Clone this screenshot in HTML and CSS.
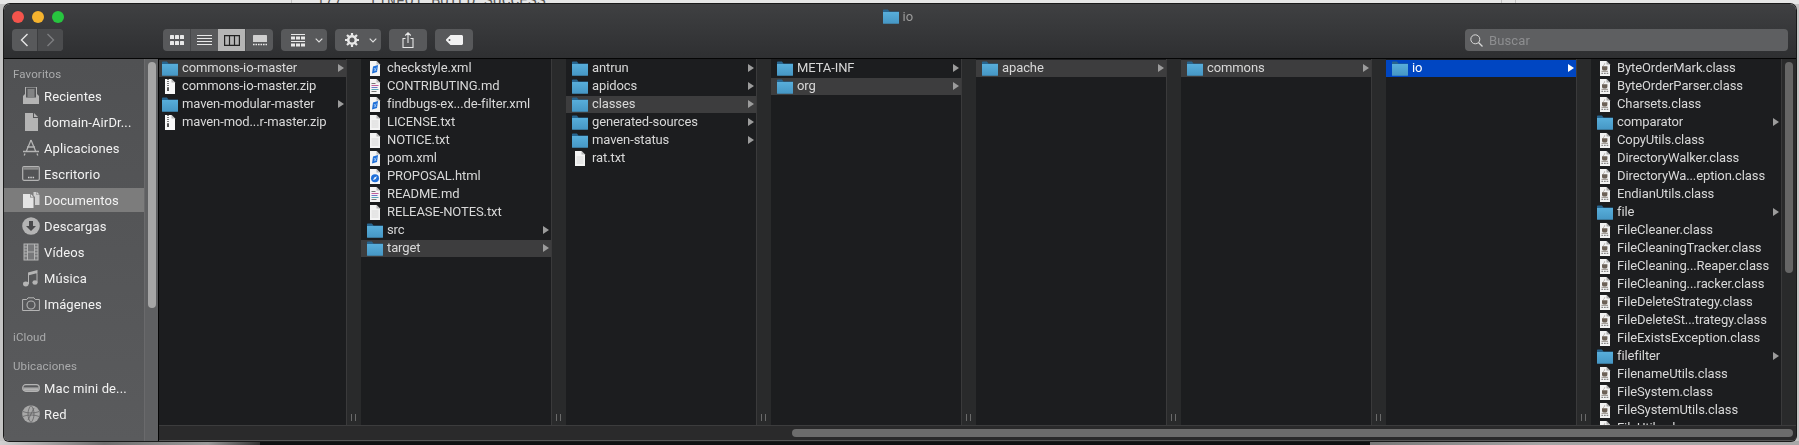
FILE: index.html
```html
<html>
  <head>
    <meta charset="utf-8">
    <title>io</title>
    <link rel="stylesheet" href="styles.css">
  </head>
  <body>
    <svg class="defs" width="0" height="0">
      <defs>
        <linearGradient id="folderFill" x1="0" y1="0" x2="0" y2="1">
          <stop offset="0" stop-color="#58aedb"/>
          <stop offset="1" stop-color="#4596c4"/>
        </linearGradient>
        <symbol id="folder" viewBox="0 0 16 15">
          <path d="M0 1.2C0 .8.3.5.7.5h4.2L6.5 2.4H16V5H0z" fill="#27658f"/>
          <path d="M0 3h16v11.2c0 .3-.3.6-.6.6H.6c-.3 0-.6-.3-.6-.6z" fill="url(#folderFill)"/>
        </symbol>
        <symbol id="txt" viewBox="0 0 16 15">
          <path d="M3 0h6.5L13 3.6V15H3z" fill="#f4f4f4"/>
          <path d="M9.5 0L13 3.6H9.5z" fill="#b9b9b9"/>
          <path d="M4.5 6h7M4.5 8h7M4.5 10h7M4.5 12h7" stroke="#d0d0d0" stroke-width=".8"/>
        </symbol>
        <symbol id="zip" viewBox="0 0 16 15">
          <path d="M3 0h6.5L13 3.6V15H3z" fill="#f8f8f8"/>
          <path d="M9.5 0L13 3.6H9.5z" fill="#bbb"/>
          <path d="M6 0v9" stroke="#444" stroke-width="1.4" stroke-dasharray="1 1"/>
          <rect x="5" y="9" width="2" height="3" fill="#555"/>
        </symbol>
        <symbol id="xml" viewBox="0 0 16 15">
          <path d="M3 0h6.5L13 3.6V15H3z" fill="#f4f4f4"/>
          <path d="M9.5 0L13 3.6H9.5z" fill="#b9b9b9"/>
          <path d="M6 5.5l5-1.5-1 7-5 1.5z" fill="#1f6fd8"/>
          <path d="M7 7l2.2 3M9.4 6.6l-2 3.6" stroke="#bcd8f8" stroke-width=".7"/>
        </symbol>
        <symbol id="md" viewBox="0 0 16 15">
          <path d="M3 0h6.5L13 3.6V15H3z" fill="#f4f4f4"/>
          <path d="M9.5 0L13 3.6H9.5z" fill="#b9b9b9"/>
          <path d="M4.5 4.5h4" stroke="#777" stroke-width="1"/>
          <path d="M4.5 6.5h7" stroke="#c0609a" stroke-width="1"/>
          <path d="M4.5 8.5h6" stroke="#6a78c8" stroke-width="1"/>
          <path d="M4.5 10.5h7" stroke="#59a6b8" stroke-width="1"/>
          <path d="M4.5 12.5h5" stroke="#777" stroke-width="1"/>
        </symbol>
        <symbol id="html" viewBox="0 0 16 15">
          <path d="M3 0h6.5L13 3.6V15H3z" fill="#f4f4f4"/>
          <path d="M9.5 0L13 3.6H9.5z" fill="#b9b9b9"/>
          <circle cx="8" cy="9.2" r="4" fill="#1f6fd8"/>
          <path d="M10 7.2L8.7 9.9 6 11.2l1.3-2.7z" fill="#e8f0fa"/>
        </symbol>
        <symbol id="class" viewBox="0 0 16 15">
          <path d="M3 0h6.5L13 3.6V15H3z" fill="#f2f2f2"/>
          <path d="M9.5 0L13 3.6H9.5z" fill="#aaa"/>
          <path d="M5 5.2h5.4v2.6c0 1-.8 1.7-1.7 1.7H6.7C5.8 9.500 5 8.800 5 7.800z" fill="#6b6056"/>
          <path d="M6.500 4.600c0-.8 1.400-1 1.200-2.200" stroke="#8a8078" stroke-width=".7" fill="none"/>
          <path d="M4.500 10.300h6.500" stroke="#7a7068" stroke-width=".8"/>
          <path d="M4.400 12.300h1.700M7 12.300h1.700M9.600 12.300h1.700" stroke="#888" stroke-width="1.300"/>
        </symbol>
      </defs>
    </svg>

    <div class="desk-top">
      <span class="desk-num">177</span><span class="desk-log">[INFO] BUILD SUCCESS</span><i class="desk-rule"></i>
    </div>

    <div class="window">
      <header class="toolbar">
        <div class="titlebar">
          <div class="lights">
            <i class="light red"></i><i class="light yellow"></i><i class="light green"></i>
          </div>
          <div class="title"><svg class="title-ico"><use href="#folder"/></svg><span>io</span></div>
          <div></div>
        </div>
        <div class="tools">
          <div class="group nav">
            <div class="nav-btn">
              <svg width="9" height="14" viewBox="0 0 9 14"><path d="M7.500 1L1.500 7l6 6" fill="none" stroke="#e6e6e6" stroke-width="1.400"/></svg>
            </div>
            <div class="nav-btn off">
              <svg width="9" height="14" viewBox="0 0 9 14"><path d="M1.500 1l6 6-6 6" fill="none" stroke="#7d7e80" stroke-width="1.400"/></svg>
            </div>
          </div>
          <div class="group views">
            <div class="view">
              <svg width="14" height="10" viewBox="0 0 14 10" fill="#e8e8e8"><rect width="4" height="4" rx=".6"/><rect x="5" width="4" height="4" rx=".6"/><rect x="10" width="4" height="4" rx=".6"/><rect y="6" width="4" height="4" rx=".6"/><rect x="5" y="6" width="4" height="4" rx=".6"/><rect x="10" y="6" width="4" height="4" rx=".6"/></svg>
            </div>
            <div class="view">
              <svg width="15" height="10" viewBox="0 0 15 10"><path d="M0 .5h15M0 3.500h15M0 6.500h15M0 9.500h15" stroke="#e8e8e8"/></svg>
            </div>
            <div class="view on">
              <svg width="16" height="11" viewBox="0 0 16 11"><path d="M.6.6h14.800v9.800H.6zM5.500.6v9.800M10.500.6v9.800" fill="none" stroke="#222" stroke-width="1.200"/></svg>
            </div>
            <div class="view">
              <svg width="14" height="11" viewBox="0 0 14 11"><rect width="14" height="7" rx=".6" fill="#cfcfcf"/><path d="M0 9.500h14" stroke="#e8e8e8" stroke-width="1.600" stroke-dasharray="1.600 .9"/></svg>
            </div>
          </div>
          <div class="group menu">
            <svg width="14" height="13" viewBox="0 0 14 13" fill="#e8e8e8"><rect width="14" height="1"/><rect y="2.500" width="4" height="3"/><rect x="5" y="2.500" width="4" height="3"/><rect x="10" y="2.500" width="4" height="3"/><rect y="7" width="14" height="1"/><rect y="9.500" width="4" height="3"/><rect x="5" y="9.500" width="4" height="3"/><rect x="10" y="9.500" width="4" height="3"/></svg>
            <svg class="chev" width="8" height="5" viewBox="0 0 8 5"><path d="M.7.700L4 4l3.300-3.300" fill="none" stroke="#e0e0e0" stroke-width="1.100"/></svg>
          </div>
          <div class="group menu gear">
            <svg width="14" height="14" viewBox="0 0 14 14"><circle cx="7" cy="7" r="3.800" fill="none" stroke="#e8e8e8" stroke-width="2.600"/><path d="M7 0v2.500M7 11.500V14M0 7h2.500M11.500 7H14M2 2l1.800 1.800M10.200 10.200L12 12M12 2l-1.800 1.800M3.800 10.200L2 12" stroke="#e8e8e8" stroke-width="2.200"/></svg>
            <svg class="chev" width="8" height="5" viewBox="0 0 8 5"><path d="M.7.700L4 4l3.300-3.300" fill="none" stroke="#e0e0e0" stroke-width="1.100"/></svg>
          </div>
          <div class="group action">
            <svg width="12" height="16" viewBox="0 0 12 16"><path d="M3.500 6.500H1v9h10v-9H8.500M6 11V1M3.200 3.500L6 .8l2.800 2.700" fill="none" stroke="#e8e8e8" stroke-width="1.100"/></svg>
          </div>
          <div class="group action tag">
            <svg width="17" height="10" viewBox="0 0 17 10"><path d="M4.500 0H15.500C16.300 0 17 .7 17 1.500v7c0 .8-.7 1.500-1.500 1.500H4.500L0 5.500v-1zM3.500 4a1 1 0 100 2 1 1 0 000-2z" fill="#f2f2f2" fill-rule="evenodd"/></svg>
          </div>
          <div class="search">
            <svg width="13" height="13" viewBox="0 0 13 13"><circle cx="5.300" cy="5.300" r="4.500" fill="none" stroke="#d8d8d8" stroke-width="1"/><path d="M8.500 8.500l4 4" stroke="#d8d8d8" stroke-width="1.200"/></svg>
            <span>Buscar</span>
          </div>
        </div>
      </header>

      <div class="body">
        <aside class="sidebar">
          <div class="side-list">
            <div class="side-head">Favoritos</div>
            <div class="side-row">
              <svg viewBox="0 0 18 18" fill="#b4b4b4"><path d="M3.500 0h11v11h-11z" fill="none" stroke="#b4b4b4"/><path d="M5.500 3h7M5.500 5h7M5.500 7h7M5.500 9h7" stroke="#b4b4b4"/><path d="M1 9l2-2v4h12V7l2 2v8H1z"/></svg>
              <span>Recientes</span>
            </div>
            <div class="side-row">
              <svg viewBox="0 0 18 18" fill="#b4b4b4"><path d="M3 0h8v5h5v13H3zM12 0l4 4h-4z"/></svg>
              <span>domain-AirDr...</span>
            </div>
            <div class="side-row">
              <svg viewBox="0 0 18 18"><path d="M9 1L4 13M9 1l5 12M1 12.500h16M5 8h8" fill="none" stroke="#b4b4b4" stroke-width="1.300"/><path d="M3 14.500l-.8 2M15 14.500l.8 2" stroke="#b4b4b4" stroke-width="1.300"/></svg>
              <span>Aplicaciones</span>
            </div>
            <div class="side-row">
              <svg viewBox="0 0 18 18"><rect x=".7" y="1.700" width="16.600" height="13.600" rx="1.200" fill="none" stroke="#b4b4b4" stroke-width="1.200"/><rect x="1.300" y="2.300" width="15.400" height="2.400" fill="#8a8a8a"/><path d="M6 12.500h1.500M8.300 12.500h1.500M10.600 12.500h1.500" stroke="#d0d0d0" stroke-width="1.300"/></svg>
              <span>Escritorio</span>
            </div>
            <div class="side-row on">
              <svg viewBox="0 0 18 18" fill="#e4e4e4"><path d="M1 3h7v3.500h3.500V17H1zM8.700 3l2.800 2.800H8.700z"/><path d="M11.500 1h3v3h3v10h-4.500V6L11.500 4.500zM15 1l2.500 2.500H15z" fill="#cfcfcf"/></svg>
              <span>Documentos</span>
            </div>
            <div class="side-row">
              <svg viewBox="0 0 18 18"><circle cx="9" cy="9" r="8.800" fill="#b4b4b4"/><path d="M7 4h4v5h3l-5 5-5-5h3z" fill="#4a4a4c"/></svg>
              <span>Descargas</span>
            </div>
            <div class="side-row">
              <svg viewBox="0 0 18 18"><rect x="2" y="1" width="14" height="16" fill="#77787a" stroke="#b4b4b4"/><path d="M5.500 1v16M12.500 1v16M5.500 9h7M2 4h3.500M2 7h3.500M2 10h3.500M2 13h3.500M12.500 4H16M12.500 7H16M12.500 10H16M12.500 13H16" stroke="#b4b4b4" fill="none"/></svg>
              <span>Vídeos</span>
            </div>
            <div class="side-row">
              <svg viewBox="0 0 18 18" fill="#b4b4b4"><path d="M6 3.500L15.500 1v3L7 6.300V15H6zM14.500 3h1v10.500h-1z"/><ellipse cx="3.800" cy="15" rx="2.800" ry="2.400"/><ellipse cx="13" cy="13.500" rx="2.600" ry="2.200"/></svg>
              <span>Música</span>
            </div>
            <div class="side-row">
              <svg viewBox="0 0 18 18"><path d="M.6 4.500h4.200L6 2.800h6l1.200 1.700h4.200v11H.6z" fill="none" stroke="#b4b4b4"/><circle cx="9" cy="10" r="4" fill="none" stroke="#b4b4b4" stroke-width="1.100"/></svg>
              <span>Imágenes</span>
            </div>
            <div class="side-head cloud">iCloud</div>
            <div class="side-head places">Ubicaciones</div>
            <div class="side-row">
              <svg viewBox="0 0 18 18"><rect x=".7" y="5.700" width="16.600" height="6.600" rx="3" fill="none" stroke="#b4b4b4" stroke-width="1.200"/><path d="M1 9h16" stroke="#b4b4b4"/><rect x="1.500" y="9.300" width="15" height="2.400" rx="1.200" fill="#b4b4b4"/></svg>
              <span>Mac mini de...</span>
            </div>
            <div class="side-row">
              <svg viewBox="0 0 18 18"><circle cx="9" cy="9" r="8.800" fill="#a8a8a8"/><path d="M9 .5c-4 4-4 13 0 17M9 .5c4 4 4 13 0 17M1 6.500c5 2 11 2 16 0M1 11.500c5-2 11-2 16 0M12 3L6 15" fill="none" stroke="#5a5a5c" stroke-width=".7"/></svg>
              <span>Red</span>
            </div>
          </div>
          <div class="side-track"><div class="side-thumb"></div></div>
        </aside>

        <div class="browser">
          <div class="columns">
            <div class="col first">
              <div class="row sel"><svg class="ico"><use href="#folder"/></svg><span>commons-io-master</span><i class="arrow"></i></div>
              <div class="row"><svg class="ico"><use href="#zip"/></svg><span>commons-io-master.zip</span></div>
              <div class="row"><svg class="ico"><use href="#folder"/></svg><span>maven-modular-master</span><i class="arrow"></i></div>
              <div class="row"><svg class="ico"><use href="#zip"/></svg><span>maven-mod...r-master.zip</span></div>
            </div>
            <div class="strip"><i class="grip"></i></div>
            <div class="col">
              <div class="row"><svg class="ico"><use href="#xml"/></svg><span>checkstyle.xml</span></div>
              <div class="row"><svg class="ico"><use href="#md"/></svg><span>CONTRIBUTING.md</span></div>
              <div class="row"><svg class="ico"><use href="#xml"/></svg><span>findbugs-ex...de-filter.xml</span></div>
              <div class="row"><svg class="ico"><use href="#txt"/></svg><span>LICENSE.txt</span></div>
              <div class="row"><svg class="ico"><use href="#txt"/></svg><span>NOTICE.txt</span></div>
              <div class="row"><svg class="ico"><use href="#xml"/></svg><span>pom.xml</span></div>
              <div class="row"><svg class="ico"><use href="#html"/></svg><span>PROPOSAL.html</span></div>
              <div class="row"><svg class="ico"><use href="#md"/></svg><span>README.md</span></div>
              <div class="row"><svg class="ico"><use href="#txt"/></svg><span>RELEASE-NOTES.txt</span></div>
              <div class="row"><svg class="ico"><use href="#folder"/></svg><span>src</span><i class="arrow"></i></div>
              <div class="row sel"><svg class="ico"><use href="#folder"/></svg><span>target</span><i class="arrow"></i></div>
            </div>
            <div class="strip"><i class="grip"></i></div>
            <div class="col">
              <div class="row"><svg class="ico"><use href="#folder"/></svg><span>antrun</span><i class="arrow"></i></div>
              <div class="row"><svg class="ico"><use href="#folder"/></svg><span>apidocs</span><i class="arrow"></i></div>
              <div class="row sel"><svg class="ico"><use href="#folder"/></svg><span>classes</span><i class="arrow"></i></div>
              <div class="row"><svg class="ico"><use href="#folder"/></svg><span>generated-sources</span><i class="arrow"></i></div>
              <div class="row"><svg class="ico"><use href="#folder"/></svg><span>maven-status</span><i class="arrow"></i></div>
              <div class="row"><svg class="ico"><use href="#txt"/></svg><span>rat.txt</span></div>
            </div>
            <div class="strip"><i class="grip"></i></div>
            <div class="col">
              <div class="row"><svg class="ico"><use href="#folder"/></svg><span>META-INF</span><i class="arrow"></i></div>
              <div class="row sel"><svg class="ico"><use href="#folder"/></svg><span>org</span><i class="arrow"></i></div>
            </div>
            <div class="strip"><i class="grip"></i></div>
            <div class="col">
              <div class="row sel"><svg class="ico"><use href="#folder"/></svg><span>apache</span><i class="arrow"></i></div>
            </div>
            <div class="strip"><i class="grip"></i></div>
            <div class="col">
              <div class="row sel"><svg class="ico"><use href="#folder"/></svg><span>commons</span><i class="arrow"></i></div>
            </div>
            <div class="strip"><i class="grip"></i></div>
            <div class="col">
              <div class="row active"><svg class="ico"><use href="#folder"/></svg><span>io</span><i class="arrow"></i></div>
            </div>
            <div class="strip"><i class="grip"></i></div>
            <div class="col">
              <div class="row"><svg class="ico"><use href="#class"/></svg><span>ByteOrderMark.class</span></div>
              <div class="row"><svg class="ico"><use href="#class"/></svg><span>ByteOrderParser.class</span></div>
              <div class="row"><svg class="ico"><use href="#class"/></svg><span>Charsets.class</span></div>
              <div class="row"><svg class="ico"><use href="#folder"/></svg><span>comparator</span><i class="arrow"></i></div>
              <div class="row"><svg class="ico"><use href="#class"/></svg><span>CopyUtils.class</span></div>
              <div class="row"><svg class="ico"><use href="#class"/></svg><span>DirectoryWalker.class</span></div>
              <div class="row"><svg class="ico"><use href="#class"/></svg><span>DirectoryWa...eption.class</span></div>
              <div class="row"><svg class="ico"><use href="#class"/></svg><span>EndianUtils.class</span></div>
              <div class="row"><svg class="ico"><use href="#folder"/></svg><span>file</span><i class="arrow"></i></div>
              <div class="row"><svg class="ico"><use href="#class"/></svg><span>FileCleaner.class</span></div>
              <div class="row"><svg class="ico"><use href="#class"/></svg><span>FileCleaningTracker.class</span></div>
              <div class="row"><svg class="ico"><use href="#class"/></svg><span>FileCleaning...Reaper.class</span></div>
              <div class="row"><svg class="ico"><use href="#class"/></svg><span>FileCleaning...racker.class</span></div>
              <div class="row"><svg class="ico"><use href="#class"/></svg><span>FileDeleteStrategy.class</span></div>
              <div class="row"><svg class="ico"><use href="#class"/></svg><span>FileDeleteSt...trategy.class</span></div>
              <div class="row"><svg class="ico"><use href="#class"/></svg><span>FileExistsException.class</span></div>
              <div class="row"><svg class="ico"><use href="#folder"/></svg><span>filefilter</span><i class="arrow"></i></div>
              <div class="row"><svg class="ico"><use href="#class"/></svg><span>FilenameUtils.class</span></div>
              <div class="row"><svg class="ico"><use href="#class"/></svg><span>FileSystem.class</span></div>
              <div class="row"><svg class="ico"><use href="#class"/></svg><span>FileSystemUtils.class</span></div>
              <div class="row"><svg class="ico"><use href="#class"/></svg><span>FileUtils.class</span></div>
            </div>
            <div class="vscroll"><div class="vthumb"></div></div>
          </div>
          <div class="hscroll"><div class="hthumb"></div></div>
        </div>
      </div>
    </div>

    <div class="desk-bottom">
      <div class="shade left"></div>
      <div class="dock-edge"></div>
      <div class="shade right"></div>
    </div>
  </body>
</html>
```

FILE: styles.css
```css
html {
  background: #c4c4c4;
  font-family: Roboto, "Liberation Sans", sans-serif;
  font-size: 13px;
  letter-spacing: .12px;
  color: #d8d8d8;
}
body {
  margin: 0;
  width: 1799px;
  height: 445px;
  overflow: hidden;
}
.defs {
  display: block;
  height: 0;
}

/* what shows behind the window */
.desk-top {
  display: flex;
  height: 4px;
  overflow: hidden;
  background: #e6e6e6;
  font-family: "Liberation Mono", monospace;
  font-size: 14.7px;
  letter-spacing: 0;
  line-height: 3px;
  color: #555;
}
.desk-num {
  margin-left: 291px;
  padding-left: 24px;
  border-left: 1px solid #c2c2c2;
}
.desk-log {
  margin-left: 27px;
}
.desk-rule {
  width: 13px;
  margin-left: 955px;
  border-left: 1px solid #c2c2c2;
  border-right: 1px solid #c2c2c2;
}
.desk-bottom {
  display: flex;
  height: 4px;
}
.shade {
  height: 4px;
}
.shade.left {
  width: 260px;
  background: linear-gradient(90deg, #d0d0d0, #6e6e6e 40%, #9a9a9a 80%, #333);
}
.shade.right {
  flex: 1;
  background: linear-gradient(90deg, #777, #a4a4a4 40%, #a8a8a8);
}
.dock-edge {
  width: 1110px;
  background: #101112;
}

/* window */
.window {
  display: flex;
  flex-direction: column;
  width: 1792px;
  height: 437px;
  margin-left: 4px;
  border-radius: 6px 6px 5px 5px;
  overflow: hidden;
  box-shadow: 0 0 0 1px #1a1a1a;
  filter: blur(.3px);
}
.toolbar {
  height: 54px;
  flex: none;
  border-bottom: 1px solid #050505;
  background: linear-gradient(#3f4042, #2e2f31);
}
.titlebar {
  display: grid;
  grid-template-columns: 1fr auto 1fr;
  align-items: center;
  height: 25px;
}
.lights {
  display: flex;
  gap: 8px;
  padding-left: 8px;
  margin-top: 1px;
}
.light {
  width: 12px;
  height: 12px;
  border-radius: 50%;
}
.light.red { background: #f4544c; }
.light.yellow { background: #f5b32e; }
.light.green { background: #27c53f; }
.title {
  display: flex;
  align-items: center;
  gap: 4px;
  margin-right: 4px;
  color: #9c9c9c;
}
.title-ico {
  width: 16px;
  height: 15px;
}
.tools {
  display: flex;
  height: 22px;
  padding-left: 8px;
}
.group {
  display: flex;
  align-items: center;
  height: 22px;
  border-radius: 4px;
  background: #58595b;
  overflow: hidden;
}
.nav {
  width: 51px;
  margin-right: 100px;
}
.nav-btn {
  display: flex;
  align-items: center;
  justify-content: center;
  height: 22px;
  width: 25px;
}
.nav-btn.off {
  width: 26px;
  border-left: 1px solid #3c3d3f;
  background: #4b4c4e;
}
.views {
  width: 110px;
}
.view {
  display: flex;
  align-items: center;
  justify-content: center;
  flex: 1;
  height: 22px;
  border-left: 1px solid #47484a;
}
.view:first-child {
  border-left: 0;
}
.view.on {
  background: #b5b5b5;
  border-left: 0;
}
.menu {
  width: 46px;
  margin-left: 8px;
  padding-left: 10px;
  box-sizing: border-box;
}
.chev {
  margin-left: 10px;
}
.gear {
  padding-left: 10px;
}
.action {
  justify-content: center;
  width: 38px;
  margin-left: 8px;
}
.search {
  display: flex;
  align-items: center;
  gap: 6px;
  width: 323px;
  height: 22px;
  box-sizing: border-box;
  padding-left: 5px;
  margin-left: 992px;
  border-radius: 4px;
  background: #5e5f61;
  color: #8d8e90;
}

/* sidebar */
.body {
  display: flex;
  flex: 1;
  min-height: 0;
}
.sidebar {
  display: flex;
  width: 154px;
  flex: none;
  border-right: 1px solid #050505;
  background: linear-gradient(#505153, #5a5b5d);
}
.side-list {
  flex: 1;
  padding-top: 7px;
}
.side-head {
  height: 16px;
  line-height: 16px;
  padding-left: 9px;
  margin-bottom: 2px;
  font-size: 11.5px;
  color: #aaabac;
}
.side-head.cloud {
  margin-top: 13px;
}
.side-head.places {
  margin-top: 13px;
}
.side-row {
  display: flex;
  align-items: center;
  gap: 4px;
  height: 24px;
  padding-left: 18px;
  margin-bottom: 2px;
  color: #f2f2f2;
}
.side-row svg {
  width: 18px;
  height: 18px;
}
.side-row.on {
  background: #7c7c7c;
}
.side-track {
  width: 14px;
  box-sizing: border-box;
  padding: 3px 2px 0 3px;
  border-left: 1px solid #6a6a6c;
  background: #5f6062;
}
.side-thumb {
  width: 8px;
  height: 246px;
  border-radius: 4px;
  background: #a6a6a6;
}

/* columns */
.browser {
  display: flex;
  flex-direction: column;
  flex: 1;
  min-width: 0;
  background: #1c1d1f;
}
.columns {
  display: flex;
  height: 366px;
  flex: none;
}
.col {
  width: 190px;
  flex: none;
  overflow: hidden;
}
.col.first {
  width: 187px;
}
.col.first .row {
  padding-left: 3px;
}
.row {
  display: flex;
  align-items: center;
  gap: 4px;
  height: 18px;
  box-sizing: border-box;
  padding-left: 6px;
  padding-right: 2px;
  padding-bottom: 1px;
  border-top: 1px solid transparent;
  letter-spacing: -.1px;
  white-space: nowrap;
}
.row span {
  margin-bottom: 2px;
}
.row.sel,
.row.active {
  background-clip: padding-box;
}
.row.sel {
  background-color: #3d3d3e;
}
.row.active {
  background-color: #0046c2;
  color: #fff;
}
.ico {
  width: 16px;
  height: 15px;
  flex: none;
}
.arrow {
  width: 0;
  height: 0;
  margin-left: auto;
  border-left: 6px solid #9c9c9c;
  border-top: 4.5px solid transparent;
  border-bottom: 4.5px solid transparent;
}
.row.active .arrow {
  border-left-color: #fff;
}
.strip {
  display: flex;
  align-items: flex-end;
  width: 15px;
  flex: none;
  box-sizing: border-box;
  padding-left: 4px;
  padding-bottom: 4px;
  border-left: 1px solid #3a3a3b;
  background: #292a2b;
}
.grip {
  width: 3px;
  height: 7px;
  border-left: 1px solid #6a6a6a;
  border-right: 1px solid #6a6a6a;
}
.vscroll {
  flex: 1;
  box-sizing: border-box;
  padding: 3px 3px 0 3px;
  border-left: 1px solid #3a3a3b;
  background: #292a2b;
}
.vthumb {
  width: 8px;
  height: 211px;
  border-radius: 4px;
  background: #666;
}
.hscroll {
  flex: 1;
  box-sizing: border-box;
  padding: 3px 3px 0 633px;
  border-top: 1px solid #3c3c3d;
  border-bottom: 1px solid #555;
  background: #2a2a2b;
}
.hthumb {
  height: 8px;
  border-radius: 4px;
  background: #6c6c6c;
}
```
